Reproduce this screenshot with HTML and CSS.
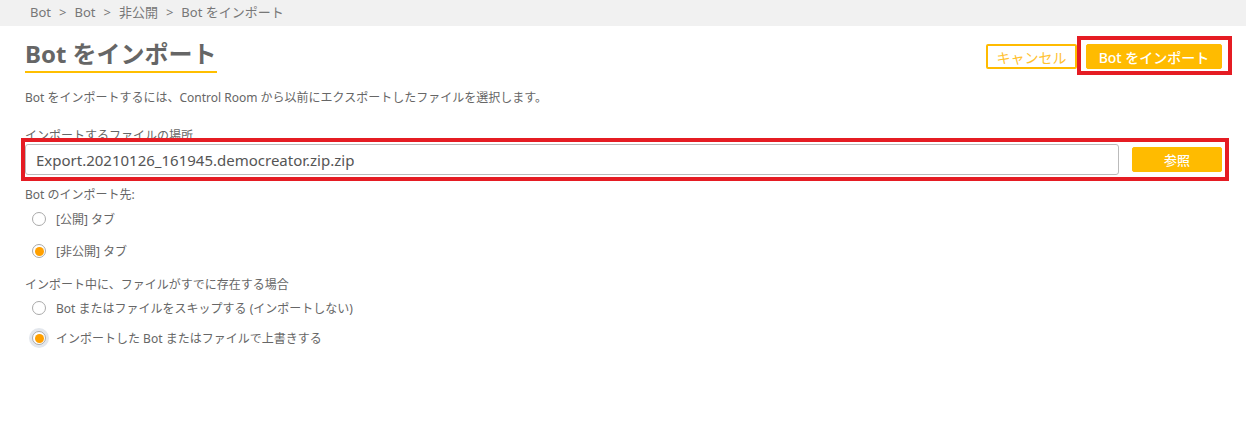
FILE: index.html
```html
<!DOCTYPE html>
<html lang="ja">
<head>
  <meta charset="UTF-8">
  <title>Bot をインポート</title>
  <link rel="stylesheet" href="styles.css">
</head>
<body>
  <div class="crumbs">
    <span>Bot</span><span class="sep">&gt;</span><span>Bot</span><span class="sep">&gt;</span><span>非公開</span><span class="sep">&gt;</span><span>Bot をインポート</span>
  </div>

  <div class="page">
    <div class="head">
      <h1 class="title">Bot をインポート</h1>
      <div class="actions">
        <button class="btn btn-outline">キャンセル</button>
        <button class="btn btn-primary marked">Bot をインポート</button>
      </div>
    </div>

    <p class="intro">Bot をインポートするには、Control Room から以前にエクスポートしたファイルを選択します。</p>

    <div class="field-label">インポートするファイルの場所</div>
    <div class="file-row marked-row">
      <input class="file-input" type="text" value="Export.20210126_161945.democreator.zip.zip">
      <button class="btn btn-primary btn-browse">参照</button>
    </div>

    <div class="group-label">Bot のインポート先:</div>
    <div class="radio"><span class="dot"></span>[公開] タブ</div>
    <div class="radio"><span class="dot on"></span>[非公開] タブ</div>

    <div class="group-label second">インポート中に、ファイルがすでに存在する場合</div>
    <div class="radio tight"><span class="dot"></span>Bot またはファイルをスキップする (インポートしない)</div>
    <div class="radio tight"><span class="dot on focus"></span>インポートした Bot またはファイルで上書きする</div>
  </div>
</body>
</html>
```

FILE: styles.css
```css
body {
  margin: 0;
  font-family: "Noto Sans", "Noto Sans CJK JP", sans-serif;
  color: #666;
  background: #fff;
}
.crumbs {
  height: 26px;
  line-height: 25px;
  background: #f1f1f1;
  padding-left: 30px;
  font-size: 13px;
  color: #777;
}
.crumbs .sep {
  margin: 0 8px;
}
.page {
  padding: 0 24px 0 25px;
}
.head {
  display: flex;
  justify-content: space-between;
  align-items: flex-start;
}
.title {
  margin: 12px 0 0;
  font-size: 24px;
  line-height: 32px;
  font-weight: bold;
  color: #666;
  border-bottom: 2px solid #ffbf00;
  padding-bottom: 1px;
}
.actions {
  display: flex;
  gap: 9px;
  margin-top: 18px;
}
.btn {
  font-family: inherit;
  font-size: 14px;
  height: 25px;
  padding: 0;
  border-radius: 2px;
  white-space: nowrap;
  cursor: pointer;
}
.btn-outline {
  background: #fff;
  border: 2px solid #ffbb00;
  color: #ffc12e;
  font-weight: normal;
  width: 91px;
}
.btn-primary {
  background: #ffbb00;
  border: 1px solid #ffbb00;
  color: #fff;
  font-weight: 500;
}
.actions .btn-primary {
  width: 136px;
}
.marked {
  position: relative;
}
.marked::after {
  content: "";
  position: absolute;
  top: -9px;
  bottom: -7px;
  left: -10px;
  right: -11px;
  border: 4px solid #e51c23;
}
.intro {
  margin: 17px 0 0;
  font-size: 12px;
  line-height: 16px;
}
.field-label {
  margin-top: 22px;
  font-size: 12px;
  line-height: 16px;
}
.file-row {
  display: flex;
  align-items: center;
  gap: 13px;
  margin-top: 0;
  position: relative;
}
.marked-row::after {
  content: "";
  position: absolute;
  top: -6px;
  bottom: -6px;
  left: -4px;
  right: -7px;
  border: 4px solid #e51c23;
}
.file-input {
  flex: 1;
  height: 31px;
  box-sizing: border-box;
  border: 1px solid #bbb;
  border-radius: 3px;
  padding: 0 10px;
  font-family: inherit;
  font-size: 15px;
  color: #555;
}
.btn-browse {
  width: 90px;
  font-size: 13px;
}
.group-label {
  margin-top: 12px;
  font-size: 12px;
  line-height: 16px;
}
.group-label.second {
  margin-top: 10px;
}
.radio {
  display: flex;
  align-items: center;
  height: 32px;
  font-size: 12px;
  padding-left: 7px;
}
.radio.tight {
  height: 30px;
}
.dot {
  width: 14px;
  height: 14px;
  box-sizing: border-box;
  border: 1px solid #aaa;
  border-radius: 50%;
  margin-right: 10px;
  background: #fff;
  display: flex;
  align-items: center;
  justify-content: center;
}
.dot.on::before {
  content: "";
  width: 9px;
  height: 9px;
  border-radius: 50%;
  background: #ffa000;
}
.dot.focus {
  box-shadow: 0 0 0 3px #e3e7ed;
}
```
